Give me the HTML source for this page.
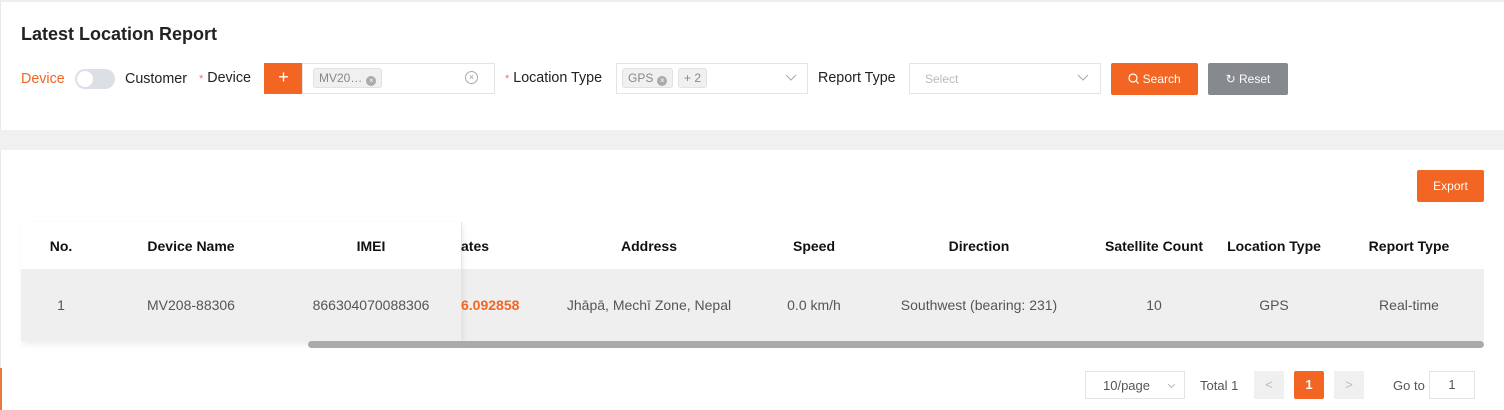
<!DOCTYPE html>
<html><head><meta charset="utf-8"><style>
*{box-sizing:border-box;margin:0;padding:0}
body{width:1504px;height:410px;background:#fff;font-family:"Liberation Sans",Arial,sans-serif;position:relative;overflow:hidden;color:#333}
.a{position:absolute;white-space:nowrap}
.box{position:absolute;border:1px solid #e4e4e4;background:#fff}
.tag{position:absolute;background:#f0f0f0;border:1px solid #e2e2e2;border-radius:3px;font-size:12px;color:#888;line-height:18px;padding:0 5px}
.x{display:inline-block;width:10px;height:10px;border-radius:50%;background:#aaa;color:#fff;font-size:8px;line-height:10px;text-align:center;margin-left:4px;vertical-align:-1px}
.th{position:absolute;top:238px;font-size:14px;font-weight:bold;color:#111;text-align:center}
.td{position:absolute;top:297px;font-size:14px;color:#555;text-align:center}
.lbl{font-size:14.3px}
</style></head><body>
<div class="a" style="left:0;top:0;width:1504px;height:2px;background:#eee"></div>
<div class="a" style="left:0;top:0;width:1px;height:410px;background:#e8e8e8"></div>
<div class="a" style="left:0;top:130px;width:1504px;height:20px;background:#f0f0f0"></div>
<div class="a" style="left:0;top:368px;width:2px;height:42px;background:#e87a3e"></div>

<div class="a" style="left:21px;top:24px;font-size:18px;font-weight:bold;color:#222">Latest Location Report</div>
<div class="a lbl" style="left:21px;top:71px;color:#f26522">Device</div>
<div class="a" style="left:75px;top:69px;width:40px;height:20px;border-radius:10px;background:#dcdfe6"></div>
<div class="a" style="left:77px;top:71px;width:16px;height:16px;border-radius:50%;background:#fff"></div>
<div class="a lbl" style="left:125px;top:71px;color:#222">Customer</div>
<div class="a lbl" style="left:199px;top:70px;color:#222"><span style="color:#f56c6c;font-size:11px">*</span> Device</div>
<div class="a" style="left:264px;top:63px;width:39px;height:31px;background:#f26522;color:#fff;font-size:18px;text-align:center;line-height:29px">+</div>
<div class="box" style="left:302px;top:63px;width:193px;height:31px"></div>
<div class="tag" style="left:313px;top:68px">MV20…<span class="x">×</span></div>
<div class="a" style="left:465px;top:71px;width:13px;height:13px;border:1px solid #aaa;border-radius:50%;font-size:9px;color:#999;text-align:center;line-height:11px">×</div>
<div class="a lbl" style="left:505px;top:70px;color:#222"><span style="color:#f56c6c;font-size:11px">*</span> Location Type</div>
<div class="box" style="left:616px;top:63px;width:192px;height:31px"></div>
<div class="tag" style="left:622px;top:68px">GPS<span class="x">×</span></div>
<div class="tag" style="left:678px;top:68px">+ 2</div>
<svg class="a" style="left:785px;top:74px" width="12" height="8"><path d="M1 1 L6 6 L11 1" fill="none" stroke="#aaa" stroke-width="1"/></svg>
<div class="a lbl" style="left:818px;top:70px;color:#222">Report Type</div>
<div class="box" style="left:909px;top:63px;width:192px;height:31px"></div>
<div class="a" style="left:925px;top:72px;font-size:12px;color:#bbb">Select</div>
<svg class="a" style="left:1077px;top:74px" width="12" height="8"><path d="M1 1 L6 6 L11 1" fill="none" stroke="#aaa" stroke-width="1"/></svg>
<div class="a" style="left:1111px;top:63px;width:87px;height:32px;background:#f26522;border-radius:2px;color:#fff;font-size:12px;text-align:center;line-height:32px"><svg width="11" height="11" style="vertical-align:-1px"><circle cx="5" cy="5" r="4" fill="none" stroke="#fff" stroke-width="1.2"/><path d="M8 8 L10.5 10.5" stroke="#fff" stroke-width="1.2"/></svg> Search</div>
<div class="a" style="left:1208px;top:63px;width:80px;height:32px;background:#868a8f;border-radius:2px;color:#fff;font-size:12px;text-align:center;line-height:32px">&#8635; Reset</div>

<div class="a" style="left:1417px;top:170px;width:67px;height:32px;background:#f26522;border-radius:2px;color:#fff;font-size:12px;text-align:center;line-height:32px">Export</div>

<div class="a" style="left:21px;top:269px;width:1463px;height:72px;background:#efefef"></div>
<div class="a" style="left:21px;top:222px;width:440px;height:119px;box-shadow:2px 3px 6px rgba(0,0,0,.08)"></div>
<div class="a" style="left:461px;top:222px;width:1px;height:119px;background:#e6e6e6"></div>
<div class="th" style="left:21px;width:80px">No.</div>
<div class="th" style="left:131px;width:120px">Device Name</div>
<div class="th" style="left:311px;width:120px">IMEI</div>
<div class="th" style="left:461px;width:30px;text-align:left">ates</div>
<div class="th" style="left:549px;width:200px">Address</div>
<div class="th" style="left:754px;width:120px">Speed</div>
<div class="th" style="left:879px;width:200px">Direction</div>
<div class="th" style="left:1094px;width:120px">Satellite Count</div>
<div class="th" style="left:1214px;width:120px">Location Type</div>
<div class="th" style="left:1349px;width:120px">Report Type</div>
<div class="td" style="left:21px;width:80px">1</div>
<div class="td" style="left:131px;width:120px">MV208-88306</div>
<div class="td" style="left:306px;width:130px">866304070088306</div>
<div class="td" style="left:461px;text-align:left;color:#f26522;font-weight:bold">6.092858</div>
<div class="td" style="left:549px;width:200px">Jhāpā, Mechī Zone, Nepal</div>
<div class="td" style="left:754px;width:120px">0.0 km/h</div>
<div class="td" style="left:879px;width:200px">Southwest (bearing: 231)</div>
<div class="td" style="left:1094px;width:120px">10</div>
<div class="td" style="left:1214px;width:120px">GPS</div>
<div class="td" style="left:1349px;width:120px">Real-time</div>
<div class="a" style="left:308px;top:341px;width:1176px;height:7px;background:#aaa;border-radius:4px"></div>

<div class="box" style="left:1085px;top:371px;width:100px;height:28px"></div>
<div class="a" style="left:1103px;top:378px;font-size:13px;color:#555">10/page</div>
<svg class="a" style="left:1167px;top:383px" width="9" height="6"><path d="M1 1 L4.5 4.5 L8 1" fill="none" stroke="#bbb" stroke-width="1"/></svg>
<div class="a" style="left:1200px;top:378px;font-size:13px;color:#555">Total 1</div>
<div class="a" style="left:1254px;top:371px;width:30px;height:28px;background:#f0f0f0;color:#bbb;text-align:center;line-height:28px;font-size:13px">&lt;</div>
<div class="a" style="left:1294px;top:371px;width:30px;height:28px;background:#f26522;border-radius:2px;color:#fff;text-align:center;line-height:28px;font-size:13px;font-weight:bold">1</div>
<div class="a" style="left:1334px;top:371px;width:30px;height:28px;background:#f0f0f0;color:#bbb;text-align:center;line-height:28px;font-size:13px">&gt;</div>
<div class="a" style="left:1393px;top:378px;font-size:13px;color:#555">Go to</div>
<div class="box" style="left:1429px;top:371px;width:46px;height:28px;text-align:center;line-height:26px;font-size:13px;color:#555">1</div>
</body></html>
